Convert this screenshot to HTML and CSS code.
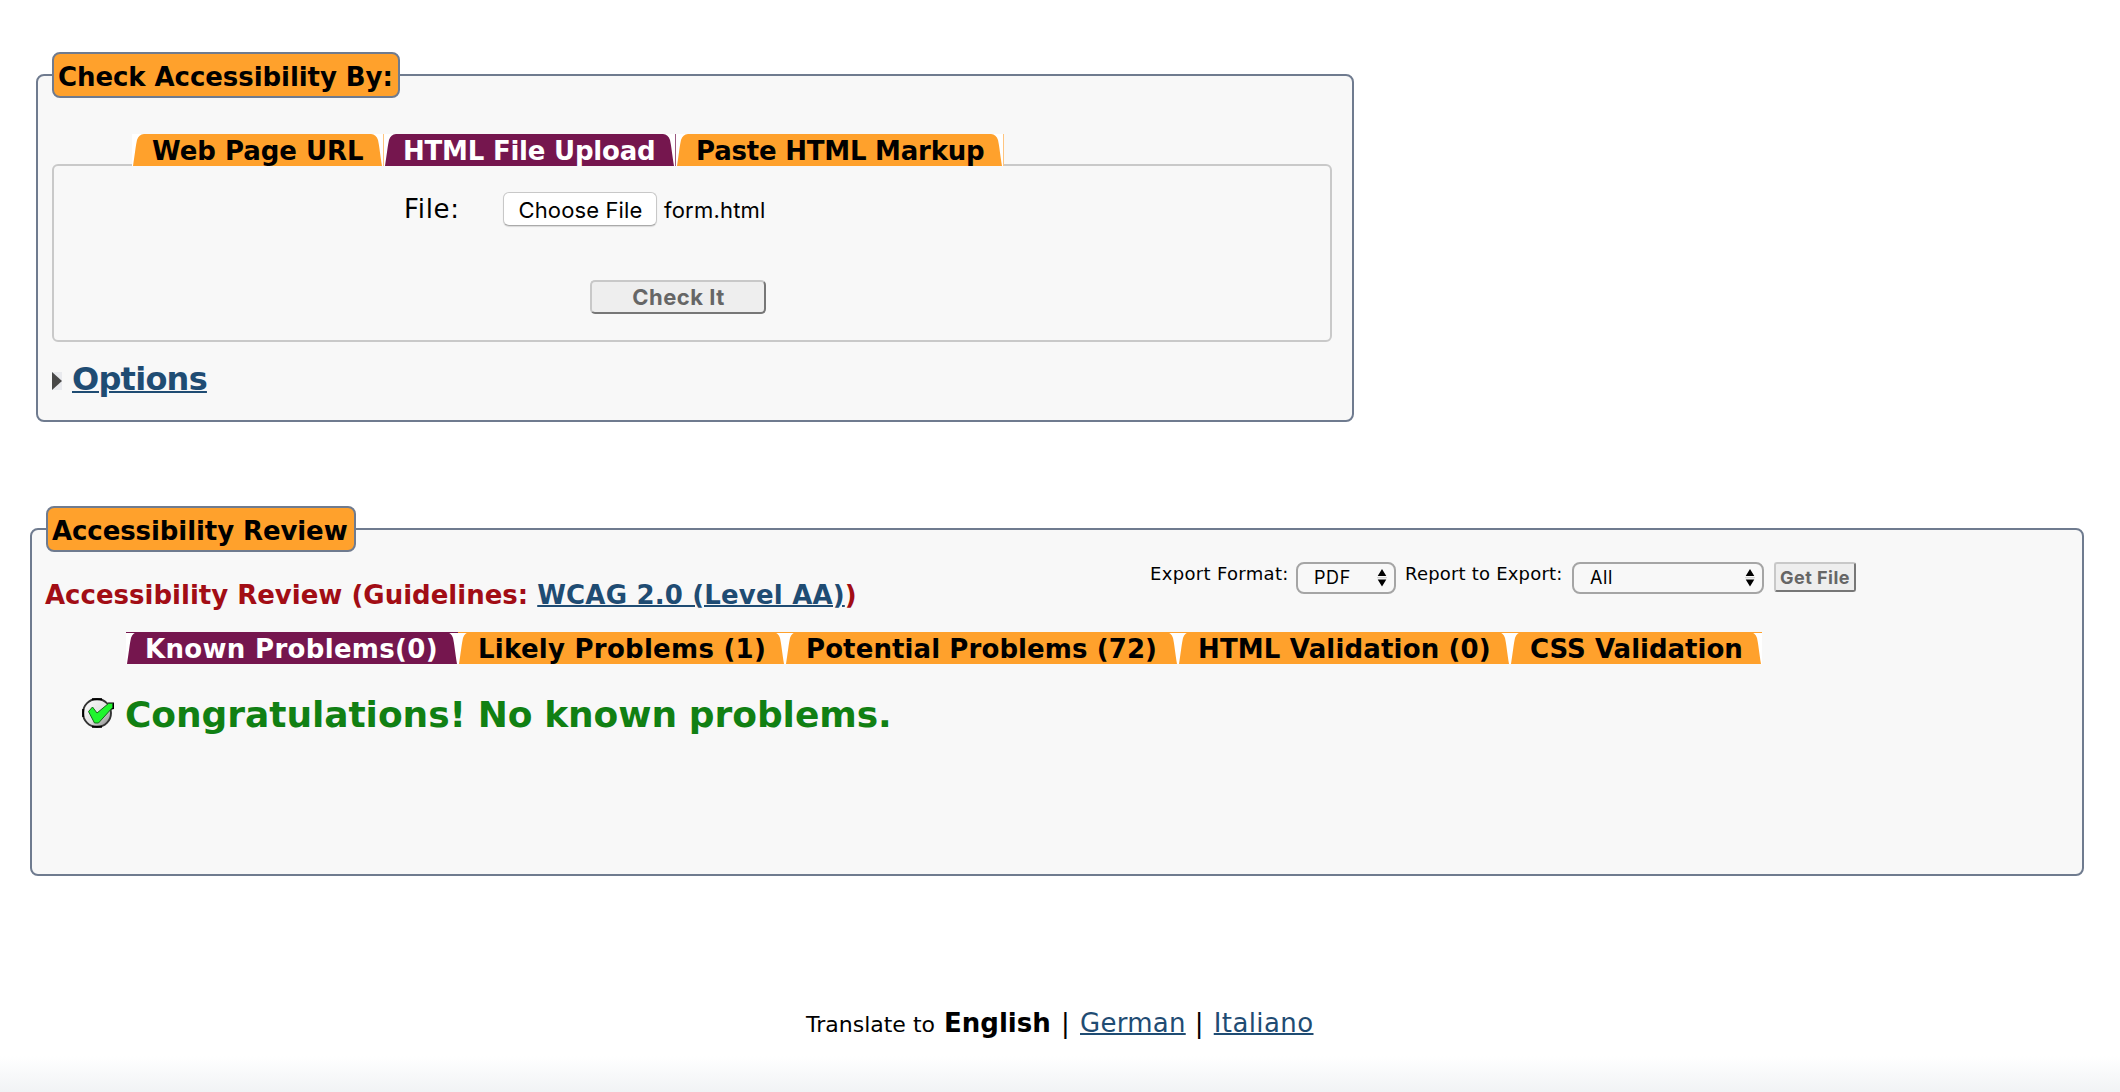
FILE: index.html
```html
<!DOCTYPE html>
<html lang="en">
<head>
<meta charset="utf-8">
<title>Web Accessibility Checker</title>
<link rel="stylesheet" href="styles.css">
</head>
<body>
<svg class="defs" aria-hidden="true">
  <symbol id="corner" viewBox="0 0 12 32"><path d="M1 32C2.600 22 3.800 11 5 6Q6.800 .5 12 0V32Z" fill="currentColor"/></symbol>
  <symbol id="arrows" viewBox="0 0 10 18"><path d="M5 0 9.300 7H.7ZM.7 10.500H9.300L5 17.500Z" fill="#000"/><path d="M0 8.200H10V9.200H0Z" fill="#ccc"/></symbol>
</svg>

<form class="panel check">
  <h2 class="legend legend-check">Check Accessibility By:</h2>
  <nav class="tabs tabs-check">
    <a class="tab t-url"><svg class="corner"><use href="#corner"/></svg><span class="label">Web Page URL</span><svg class="corner right"><use href="#corner"/></svg></a>
    <a class="tab t-file active"><svg class="corner"><use href="#corner"/></svg><span class="label">HTML File Upload</span><svg class="corner right"><use href="#corner"/></svg></a>
    <a class="tab t-paste"><svg class="corner"><use href="#corner"/></svg><span class="label">Paste HTML Markup</span><svg class="corner right"><use href="#corner"/></svg></a>
  </nav>
  <div class="upload">
    <div class="file-row">
      <label class="file-label">File:</label>
      <button type="button" class="choose">Choose File</button>
      <span class="file-name">form.html</span>
    </div>
    <button type="button" class="btn submit">Check It</button>
  </div>
  <div class="options">
    <svg class="marker" viewBox="0 0 10 18"><path d="M0 0H10V18H0Z" fill="#e9eaee"/><path d="M0 0 10 9 0 18Z" fill="#484848"/></svg>
    <a class="options-link">Options</a>
  </div>
</form>

<section class="panel review">
  <h2 class="legend legend-review">Accessibility Review</h2>
  <div class="review-head">
    <h3 class="guidelines"><span>Accessibility Review (Guidelines:</span> <a class="wcag">WCAG 2.0 (Level AA)</a>)</h3>
    <div class="export">
      <label class="export-label l-format">Export Format:</label>
      <div class="select s-format"><span>PDF</span><svg class="arrows"><use href="#arrows"/></svg></div>
      <label class="export-label l-report">Report to Export:</label>
      <div class="select s-report"><span>All</span><svg class="arrows"><use href="#arrows"/></svg></div>
      <button type="button" class="btn get">Get File</button>
    </div>
  </div>
  <nav class="tabs tabs-review">
    <a class="tab t-known active"><svg class="corner"><use href="#corner"/></svg><span class="label">Known Problems(0)</span><svg class="corner right"><use href="#corner"/></svg></a>
    <a class="tab t-likely"><svg class="corner"><use href="#corner"/></svg><span class="label">Likely Problems (1)</span><svg class="corner right"><use href="#corner"/></svg></a>
    <a class="tab t-potential"><svg class="corner"><use href="#corner"/></svg><span class="label">Potential Problems (72)</span><svg class="corner right"><use href="#corner"/></svg></a>
    <a class="tab t-html"><svg class="corner"><use href="#corner"/></svg><span class="label">HTML Validation (0)</span><svg class="corner right"><use href="#corner"/></svg></a>
    <a class="tab t-css"><svg class="corner"><use href="#corner"/></svg><span class="label">CSS Validation</span><svg class="corner right"><use href="#corner"/></svg></a>
  </nav>
  <div class="result">
    <svg class="ok" viewBox="0 0 32 32">
      <defs><linearGradient id="disc" x1="0" y1="0" x2="1" y2="1"><stop offset="0" stop-color="#fff"/><stop offset=".55" stop-color="#e2e2e2"/><stop offset="1" stop-color="#777"/></linearGradient></defs>
      <circle cx="15" cy="15" r="14" fill="url(#disc)" stroke="#333" stroke-width="1.900"/>
      <path d="M10 1.200H20M10 28.800H20M1.200 11V19" fill="none" stroke="#000" stroke-width="2"/>
      <path d="M26 4.500H32V11L28 12Z" fill="#000"/>
      <path d="M6.500 13.500 10.500 9 15 15 26.500 5.500H30.500V9.500L16.500 25H12.500Z" fill="#20f52e" stroke="#17651b" stroke-width="1"/>
    </svg>
    <span class="congrats">Congratulations! No known problems.</span>
  </div>
</section>

<footer class="footer">
  <span class="translate">Translate to</span>
  <strong class="lang en">English</strong>
  <span class="bar">|</span>
  <a class="lang de">German</a>
  <span class="bar">|</span>
  <a class="lang it">Italiano</a>
</footer>
</body>
</html>
```
FILE: styles.css
```css
* { box-sizing: border-box; }
html { background: #fff; }
body {
  margin: 0;
  height: 1092px;
  display: flex;
  flex-direction: column;
  align-items: flex-start;
  overflow: hidden;
  font: 26px/32px "DejaVu Sans", sans-serif;
  color: #000;
  background: linear-gradient(#fff, #f1f3f5) bottom / 100% 36px no-repeat #fff;
}
h2, h3 { margin: 0; font-size: 26px; }
button { padding: 0; margin: 0; }
.defs { position: absolute; width: 0; height: 0; }

.panel {
  flex: none;
  background: #f8f8f8;
  border: 2px solid #6f7b8f;
  border-radius: 8px;
}
.check { width: 1318px; height: 348px; margin: 74px 0 0 36px; }
.review { width: 2054px; height: 348px; margin: 106px 0 0 30px; }

.legend {
  height: 46px;
  margin: -24px 0 0 14px;
  padding-left: 4px;
  line-height: 46px;
  white-space: nowrap;
  background: #ffa12c;
  border: 2px solid #6f7b8f;
  border-radius: 8px;
}
.legend-check { width: 348px; letter-spacing: -.07px; }
.legend-review { width: 310px; letter-spacing: -.09px; }

/* tabs */
.tabs { position: relative; display: flex; height: 32px; font-weight: bold; }
.tabs-check { margin: 36px 0 0 94px; }
.tabs-review { margin: 14px 0 0 94px; }
.tab { flex: none; display: flex; height: 32px; background: #fff; color: #ffa12c; }
.tab.active { color: #75164e; }
.tabs-check .tab { border-right: 1px solid #ffc580; }
.tabs-check .tab.active { border-right-color: #9b5a80; }
.tabs-review .tab { background: linear-gradient(currentColor 1px, #fff 1px); }
.corner { flex: none; width: 12px; height: 32px; }
.corner.right { transform: scaleX(-1); }
.label {
  flex: 1;
  height: 32px;
  padding-left: 8px;
  line-height: 34px;
  white-space: nowrap;
  background: #ffa12c;
  color: #000;
}
.active .label { background: #75164e; color: #fff; }
.t-url { width: 252px; letter-spacing: -.03px; }
.t-file { width: 292px; letter-spacing: -.22px; }
.t-paste { width: 328px; letter-spacing: -.22px; }
.t-file .label { padding-left: 7px; }
.t-known { width: 332px; letter-spacing: .32px; }
.t-known .label { padding-left: 7px; }
.t-likely { width: 327px; letter-spacing: .27px; }
.t-potential { width: 393px; letter-spacing: .1px; }
.t-potential .label { padding-left: 9px; }
.t-html { width: 332px; letter-spacing: .16px; }
.t-css { width: 252px; }

/* upload form */
.upload {
  width: 1280px;
  height: 178px;
  margin: -2px 0 0 14px;
  padding-top: 26px;
  border: 2px solid #c9c9c9;
  border-radius: 6px;
}
.file-row { display: flex; align-items: center; height: 34px; padding-left: 350px; }
.file-label { width: 99px; letter-spacing: .7px; line-height: 32px; }
.choose {
  width: 154px;
  height: 34px;
  font: 22px/32px Inter, sans-serif;
  letter-spacing: .13px;
  color: #000;
  background: #fff;
  border: 1px solid #c8c8c8;
  border-bottom-color: #aaa;
  border-radius: 6px;
  box-shadow: 0 1px 1px rgba(0, 0, 0, .12);
}
.choose, .submit { padding: 1px 0 0 1px; }
.file-name { margin-left: 7px; padding-top: 1px; font: 22px/34px Inter, sans-serif; letter-spacing: .2px; }
.btn {
  display: block;
  font-family: Inter, sans-serif;
  font-weight: bold;
  color: #666;
  background: #eee;
  border: 2px solid;
  border-color: #c8c8c8 #777 #777 #c8c8c8;
  border-radius: 5px;
}
.submit {
  width: 176px;
  height: 34px;
  margin: 54px 0 0 536px;
  font-size: 22px;
  line-height: 29px;
  letter-spacing: .5px;
}
.options { display: flex; align-items: center; height: 40px; margin: 17px 0 0 14px; }
.marker { width: 10px; height: 18px; margin-top: 4px; }
.options-link {
  margin-left: 10px;
  font-size: 32px;
  line-height: 40px;
  font-weight: bold;
  letter-spacing: -.75px;
}
.options-link, .wcag, a.lang {
  color: #1f4c73;
  text-decoration: underline;
  text-decoration-thickness: 2px;
}

/* review */
.review-head { display: flex; height: 66px; }
.guidelines {
  width: 1118px;
  padding: 27px 0 0 13px;
  color: #a20d15;
  white-space: nowrap;
}
.wcag { letter-spacing: .18px; }
.export { display: flex; padding-top: 10px; }
.export-label { font-size: 18px; line-height: 24px; white-space: nowrap; }
.l-format { width: 146px; letter-spacing: .33px; }
.l-report { width: 167px; margin-left: 9px; letter-spacing: .2px; }
.select {
  display: flex;
  align-items: center;
  justify-content: space-between;
  height: 32px;
  padding: 0 7px 0 16px;
  font: 18px/28px Inter, sans-serif;
  letter-spacing: .6px;
  border: 2px solid #a5a5a5;
  border-radius: 8px;
}
.s-format { width: 100px; }
.s-report { width: 192px; }
.arrows { width: 10px; height: 18px; }
.get {
  width: 82px;
  height: 30px;
  margin-left: 10px;
  padding-top: 1px;
  font-size: 18px;
  line-height: 25px;
  letter-spacing: .5px;
  border-radius: 3px;
}
.result { display: flex; height: 44px; margin: 29px 0 0 50px; }
.ok { width: 32px; height: 32px; margin-top: 5px; }
.congrats {
  margin-left: 11px;
  color: #118013;
  font-size: 36px;
  line-height: 44px;
  font-weight: bold;
  letter-spacing: -.06px;
  word-spacing: -.7px;
  white-space: nowrap;
}

.footer { display: flex; align-items: baseline; margin: 131px 0 0 806px; }
.translate { width: 138px; font-size: 22px; white-space: nowrap; }
.en { width: 117px; }
.bar { width: 19px; }
.de { margin-right: 9px; letter-spacing: .27px; }
.it { letter-spacing: .4px; }
```
